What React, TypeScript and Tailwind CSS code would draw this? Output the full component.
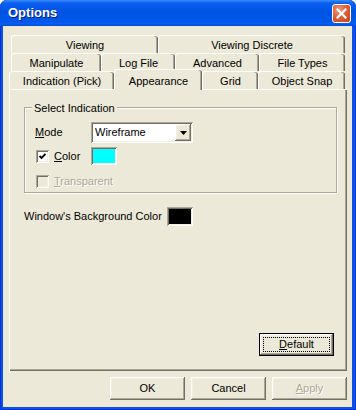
const raised =
  'shadow-[inset_-1px_-1px_0_#716f64,inset_1px_1px_0_#ffffff,inset_-2px_-2px_0_#aca899,inset_2px_2px_0_#f1efe2]';
const sunken =
  'shadow-[inset_1px_1px_0_#aca899,inset_-1px_-1px_0_#ffffff,inset_2px_2px_0_#716f64,inset_-2px_-2px_0_#f1efe2]';

function Tab({ label, className }: { label: string; className: string }) {
  return (
    <div
      className={`h-[18px] shrink-0 flex items-center justify-center pt-[1px] border-l border-t border-white rounded-t-[3px] shadow-[inset_-1px_0_0_#716f64,inset_-2px_0_0_#aca899] ${className}`}
    >
      {label}
    </div>
  );
}

function Checkbox({ checked, disabled }: { checked?: boolean; disabled?: boolean }) {
  return (
    <div
      className={`w-[13px] h-[13px] shrink-0 flex items-center justify-center ${sunken} ${
        disabled ? 'bg-[#ece9d8]' : 'bg-white'
      }`}
    >
      {checked && (
        <svg width="7" height="7" viewBox="0 0 7 7">
          <path d="M0.5 3 L2.5 5 L6.5 1" stroke="#000" strokeWidth="1.8" fill="none" />
        </svg>
      )}
    </div>
  );
}

function Button({ children, disabled }: { children: React.ReactNode; disabled?: boolean }) {
  return (
    <div
      className={`w-[75px] h-[23px] flex items-center justify-center ${raised} ${
        disabled ? 'text-[#aca899] [text-shadow:1px_1px_0_#ffffff]' : 'text-black'
      }`}
    >
      {children}
    </div>
  );
}

export default function App() {
  return (
    <div className="w-[356px] h-[410px] flex flex-col bg-[#0a53e6] rounded-t-[7px] shadow-[inset_1px_0_0_#0831d9,inset_-1px_0_0_#0831d9,inset_0_-1px_0_#0831d9] font-['Liberation_Sans',Arial,sans-serif] text-[11px] text-black overflow-hidden">
      {/* Title bar */}
      <div className="h-[26px] shrink-0 flex items-center pl-[8px] pr-[5px] rounded-t-[7px] bg-[linear-gradient(180deg,#3a8cff_0%,#0a5ef0_12%,#0054e3_45%,#0058ea_85%,#0a60f0_92%,#0046d8_100%)]">
        <span className="text-white font-bold text-[13px] [text-shadow:1px_1px_0_#0a1883]">Options</span>
        <div className="ml-auto w-[19px] h-[19px] mt-[1px] rounded-[3px] border border-white flex items-center justify-center bg-[radial-gradient(circle_at_35%_30%,#f0a080_0%,#e0603a_45%,#c2401e_100%)]">
          <svg width="11" height="11" viewBox="0 0 11 11">
            <path d="M1.5 1.5 L9.5 9.5 M9.5 1.5 L1.5 9.5" stroke="#fff" strokeWidth="2.2" strokeLinecap="square" />
          </svg>
        </div>
      </div>

      {/* Body */}
      <div className="flex-1 flex flex-col ml-[3px] mr-[4px] mb-[3px] bg-[#ece9d8] pt-[9px]">
        {/* Tab rows */}
        <div className="flex pl-[8px]">
          <Tab label="Viewing" className="w-[147px]" />
          <Tab label="Viewing Discrete" className="w-[187px]" />
        </div>
        <div className="flex pl-[8px]">
          <Tab label="Manipulate" className="w-[90px]" />
          <Tab label="Log File" className="w-[74px]" />
          <Tab label="Advanced" className="w-[84px]" />
          <Tab label="File Types" className="w-[86px]" />
        </div>
        <div className="flex items-start h-[18px] pl-[6px]">
          <Tab label="Indication (Pick)" className="w-[105px]" />
          <div className="relative z-10 w-[88px] h-[21px] -mt-[2px] shrink-0 flex justify-center pt-[3px] bg-[#ece9d8] border-l border-t border-white rounded-t-[3px] shadow-[inset_-1px_0_0_#716f64,inset_-2px_0_0_#aca899]">
            Appearance
          </div>
          <Tab label="Grid" className="w-[56px]" />
          <Tab label="Object Snap" className="w-[87px]" />
        </div>

        {/* Panel */}
        <div className="ml-[6px] w-[338px] h-[282px] flex flex-col border-l border-t border-white shadow-[inset_-1px_-1px_0_#716f64,inset_-2px_-2px_0_#aca899] pl-[14px] pt-[17px] pr-[13px] pb-[15px]">
          {/* Group box */}
          <div className="relative w-[313px] h-[86px] border border-[#aca899] shadow-[inset_1px_1px_0_#ffffff,1px_1px_0_#ffffff] pl-[10px] pt-[14px]">
            <span className="absolute -top-[8px] left-[7px] px-[2px] bg-[#ece9d8]">Select Indication</span>
            <div className="flex items-center">
              <span className="w-[56px]">
                <span className="underline">M</span>ode
              </span>
              <div className={`w-[102px] h-[21px] bg-white flex items-center ${sunken} p-[2px]`}>
                <span className="flex-1 pl-[2px]">Wireframe</span>
                <div className={`w-[16px] h-[17px] bg-[#ece9d8] flex items-center justify-center ${raised}`}>
                  <svg width="7" height="4" viewBox="0 0 7 4">
                    <path d="M0 0 H7 L3.5 4 Z" fill="#000" />
                  </svg>
                </div>
              </div>
            </div>
            <div className="flex items-center mt-[4px] h-[18px]">
              <div className="w-[56px] flex items-center pl-[1px]">
                <Checkbox checked />
                <span className="ml-[5px]">
                  <span className="underline">C</span>olor
                </span>
              </div>
              <div className={`w-[26px] h-[18px] p-[2px] ${sunken}`}>
                <div className="w-full h-full bg-[#00ffff]" />
              </div>
            </div>
            <div className="flex items-center mt-[8px] pl-[1px]">
              <Checkbox disabled />
              <span className="ml-[5px] text-[#aca899] [text-shadow:1px_1px_0_#ffffff]">
                <span className="underline">T</span>ransparent
              </span>
            </div>
          </div>

          {/* Background colour */}
          <div className="flex items-center mt-[14px]">
            <span>Window's Background Color</span>
            <div className={`ml-[5px] w-[26px] h-[19px] p-[2px] ${sunken}`}>
              <div className="w-full h-full bg-black" />
            </div>
          </div>

          {/* Default button */}
          <div className="mt-auto self-end w-[75px] h-[23px] border border-black">
            <div className={`w-full h-full p-[3px] ${raised}`}>
              <div className="w-full h-full border border-dotted border-black flex items-center justify-center">
                <span>
                  <span className="underline">D</span>efault
                </span>
              </div>
            </div>
          </div>
        </div>

        {/* Dialog buttons */}
        <div className="flex justify-end gap-[6px] mt-[6px] w-[344px]">
          <Button>OK</Button>
          <Button>Cancel</Button>
          <Button disabled>
            <span>
              <span className="underline">A</span>pply
            </span>
          </Button>
        </div>
      </div>
    </div>
  );
}
